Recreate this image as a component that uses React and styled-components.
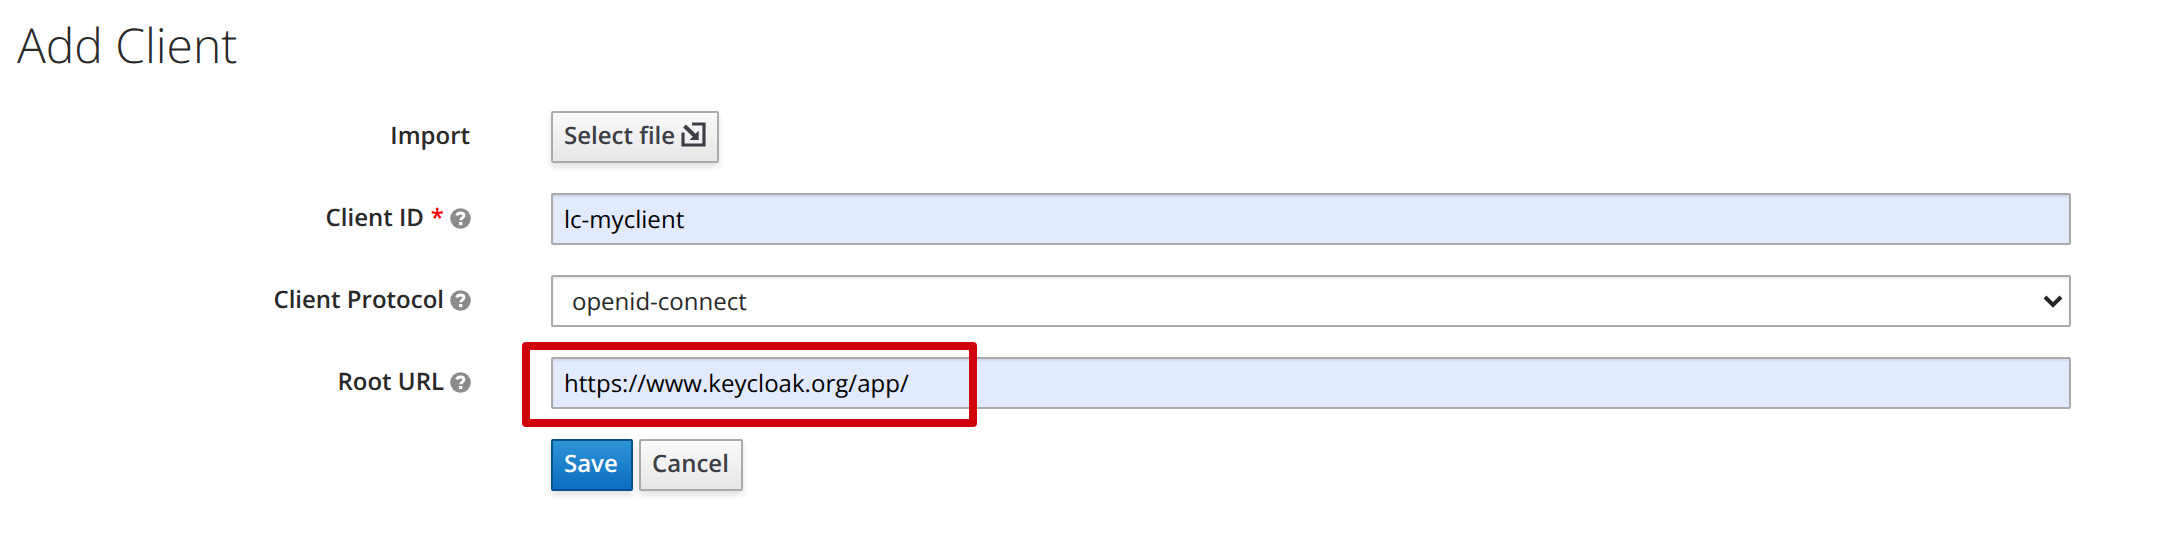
import React from "react";
import styled, { createGlobalStyle, css } from "styled-components";

const GlobalStyle = createGlobalStyle`
  *, *::before, *::after { box-sizing: border-box; }
  body {
    margin: 0;
    background: #fff;
    color: #292929;
    font-family: "Open Sans", "Noto Sans", sans-serif;
    font-size: 24px;
    line-height: 40px;
    text-rendering: geometricPrecision;
  }
`;

const Page = styled.main`
  height: 560px;
  padding: 0 111px 0 17px;
  overflow: hidden;
`;

const Title = styled.h1`
  margin: 0;
  height: 111px;
  padding-top: 19px;
  font-size: 48px;
  line-height: 53px;
  font-weight: 300;
  letter-spacing: -0.05px;
`;

const Form = styled.form`
  display: flex;
  flex-direction: column;
  gap: 30px;
`;

const Row = styled.div`
  display: grid;
  grid-template-columns: 453px 1fr;
  column-gap: 81px;
  height: 52px;
`;

const Label = styled.label`
  display: flex;
  justify-content: flex-end;
  align-items: center;
  height: 50px;
  font-weight: 600;
  white-space: pre;
`;

const Required = styled.span`
  margin-left: 7px;
  color: #f00;
`;

const HelpIcon = styled.svg`
  width: 21px;
  height: 21px;
  margin-left: 6px;
  margin-right: -1px;
  flex: none;
`;

const control = css`
  display: block;
  width: 100%;
  height: 52px;
  margin: 0;
  border: 2px solid #aaa;
  border-radius: 2px;
  outline: none;
  font: inherit;
  text-rendering: inherit;
  box-shadow: inset 0 2px 2px rgba(3, 3, 3, 0.075);
`;

const Input = styled.input`
  ${control}
  padding: 2px 11px;
  background: #e1eafe;
  color: #000;
  letter-spacing: 0.03px;
`;

const Select = styled.select`
  ${control}
  appearance: none;
  padding: 3px 48px 1px 19px;
  background: #fff;
  color: #292929;
`;

const Field = styled.div`
  position: relative;
`;

const Chevron = styled.svg`
  position: absolute;
  right: 8px;
  top: 19px;
  width: 20px;
  height: 14px;
  pointer-events: none;
`;

const Highlight = styled.div`
  position: absolute;
  left: -29px;
  top: -15px;
  width: 455px;
  height: 85px;
  border: 8px solid #d0000d;
  border-radius: 4px;
  pointer-events: none;
`;

const Actions = styled.div`
  display: flex;
  gap: 6px;
`;

const Button = styled.button`
  display: flex;
  align-items: center;
  height: 52px;
  width: ${({ $width }) => $width}px;
  padding: 0 0 2px 11px;
  border: 2px solid ${({ $primary }) => ($primary ? "#00538c" : "#aaa")};
  border-radius: 2px;
  background: ${({ $primary }) =>
    $primary
      ? "linear-gradient(#2f93d6, #0b6dc0)"
      : "linear-gradient(#fafafa, #e6e6e6)"};
  color: ${({ $primary }) => ($primary ? "#fff" : "#3c3f46")};
  box-shadow: 0 4px 6px rgba(3, 3, 3, 0.12);
  font: inherit;
  font-weight: 600;
  text-rendering: inherit;
  white-space: nowrap;
`;

const ImportIcon = styled.svg`
  width: 25px;
  height: 25px;
  margin: -3px 0 0 6px;
  flex: none;
`;

function Help() {
  return (
    <HelpIcon viewBox="0 0 21 21" aria-hidden="true">
      <circle cx="10.5" cy="10.5" r="10.3" fill="#8b8b8b" />
      <path
        d="M6.6 7.4C7.4 5.5 8.8 4.9 10.6 4.9c1.9 0 3.3 1 3.3 2.7 0 2.2-3.1 2.3-3.1 4.7"
        fill="none"
        stroke="#fff"
        strokeWidth="3"
      />
      <path d="M9.1 14h3.3v3.1H9.1z" fill="#fff" />
    </HelpIcon>
  );
}

export default function App() {
  return (
    <>
      <GlobalStyle />
      <Page>
        <Title>Add Client</Title>
        <Form>
          <Row>
            <Label>Import</Label>
            <Actions>
              <Button type="button" $width={168}>
                Select file
                <ImportIcon viewBox="0 0 25 25" aria-hidden="true">
                  <path
                    d="M11 2h12v21H2V10.5"
                    fill="none"
                    stroke="currentColor"
                    strokeWidth="3.2"
                  />
                  <path d="M3.5 4l11 10.5" stroke="currentColor" strokeWidth="4" />
                  <path d="M17.7 8.5V18H8.6z" fill="currentColor" />
                </ImportIcon>
              </Button>
            </Actions>
          </Row>
          <Row>
            <Label htmlFor="clientId">
              Client ID<Required>*</Required>
              <Help />
            </Label>
            <Input id="clientId" defaultValue="lc-myclient" />
          </Row>
          <Row>
            <Label htmlFor="protocol">
              Client Protocol
              <Help />
            </Label>
            <Field>
              <Select id="protocol" defaultValue="openid-connect">
                <option>openid-connect</option>
              </Select>
              <Chevron viewBox="0 0 20 14" aria-hidden="true">
                <path d="M2 3l8 8 8-8" fill="none" stroke="#292929" strokeWidth="4" />
              </Chevron>
            </Field>
          </Row>
          <Row>
            <Label htmlFor="rootUrl">
              Root URL
              <Help />
            </Label>
            <Field>
              <Input id="rootUrl" defaultValue="https://www.keycloak.org/app/" />
              <Highlight />
            </Field>
          </Row>
          <Row>
            <span />
            <Actions>
              <Button type="button" $primary $width={82}>
                Save
              </Button>
              <Button type="button" $width={104}>
                Cancel
              </Button>
            </Actions>
          </Row>
        </Form>
      </Page>
    </>
  );
}
